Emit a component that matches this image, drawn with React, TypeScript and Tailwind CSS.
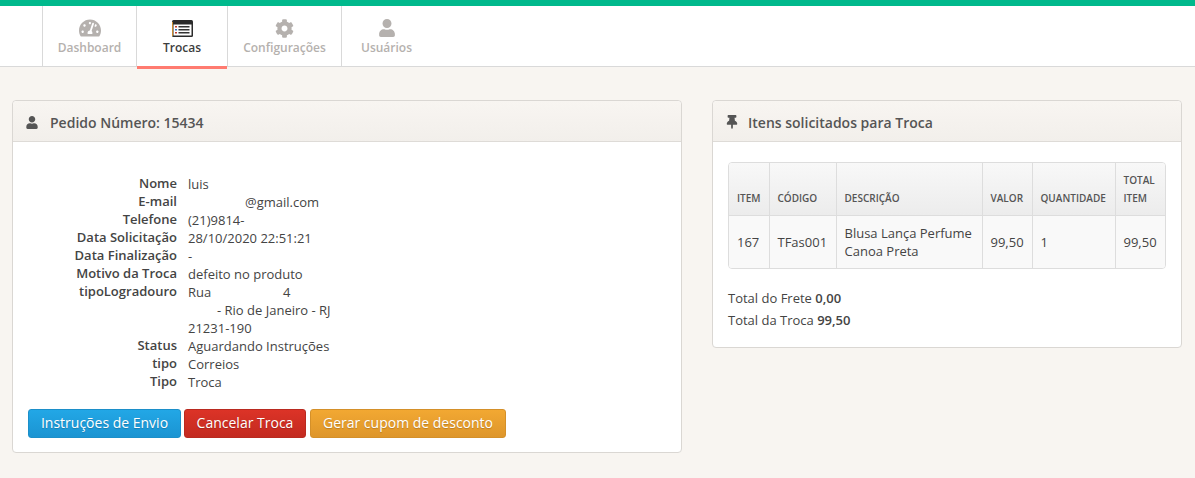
import { FaCog, FaTachometerAlt, FaThumbtack, FaUser } from 'react-icons/fa';

const detalhes: { label: string; value: React.ReactNode }[] = [
  { label: 'Nome', value: 'luis' },
  { label: 'E-mail', value: <span className="ml-[57px]">@gmail.com</span> },
  { label: 'Telefone', value: '(21)9814-' },
  { label: 'Data Solicitação', value: '28/10/2020 22:51:21' },
  { label: 'Data Finalização', value: '-' },
  { label: 'Motivo da Troca', value: 'defeito no produto' },
  {
    label: 'tipoLogradouro',
    value: (
      <>
        <span className="flex">
          <span className="w-[95px]">Rua</span>
          <span>4</span>
        </span>
        <span className="block pl-[29px]">- Rio de Janeiro - RJ</span>
        <span className="block">21231-190</span>
      </>
    ),
  },
  { label: 'Status', value: 'Aguardando Instruções' },
  { label: 'tipo', value: 'Correios' },
  { label: 'Tipo', value: 'Troca' },
];

function TrocasIcon() {
  return (
    <svg width="21" height="17" viewBox="0 0 21 17" aria-hidden="true">
      <rect x="0" y="0" width="21" height="17" rx="1.5" fill="#2b2b2b" />
      <rect x="0" y="2" width="1" height="14" fill="#c98a2e" />
      <rect x="1.5" y="4.5" width="18" height="11" fill="#fff" />
      <rect x="3" y="6" width="2" height="1.5" fill="#c0392b" />
      <rect x="3" y="9" width="2" height="1.5" fill="#2c6fbb" />
      <rect x="3" y="12" width="2" height="1.5" fill="#c0392b" />
      <rect x="6.5" y="6" width="11" height="1.5" fill="#333" />
      <rect x="6.5" y="9" width="11" height="1.5" fill="#333" />
      <rect x="6.5" y="12" width="11" height="1.5" fill="#333" />
    </svg>
  );
}

function NavTab({
  label,
  icon,
  width,
  active,
}: {
  label: string;
  icon: React.ReactNode;
  width: string;
  active?: boolean;
}) {
  return (
    <a
      className={`relative flex h-full flex-col items-center border-l border-[#d9d9d9] pt-[11px] text-[12px] font-semibold leading-[17px] ${width} ${
        active ? 'text-[#3d3d3d]' : 'text-[#b5b1ae]'
      }`}
    >
      <span className="flex h-[22px] items-center">{icon}</span>
      <span>{label}</span>
      {active && <span className="absolute -bottom-[3px] left-0 right-0 h-[3px] bg-[#ff7b70]" />}
    </a>
  );
}

function PanelHeader({ icon, title, gap }: { icon: React.ReactNode; title: string; gap: string }) {
  return (
    <div className={`flex h-[41px] items-center rounded-t-[4px] border-b border-[#dedbd7] bg-gradient-to-b from-[#f8f5f1] to-[#f2efeb] pl-[13px] pt-[2px] text-[14px] font-semibold text-[#555] ${gap}`}>
      <span className="flex w-[12px] justify-center text-[#555]">{icon}</span>
      {title}
    </div>
  );
}

const th = 'border-l border-[#dddddd] px-[8px] pb-[8px] align-bottom text-left text-[10px] font-semibold uppercase leading-[18px] text-[#555]';
const td = 'border-l border-[#dddddd] px-[8px] align-middle text-[13px] leading-[18px] text-[#444]';

export default function App() {
  return (
    <div className="h-[478px] overflow-hidden bg-[#f8f5f1] font-['Open_Sans',sans-serif] text-[13px] text-[#444]">
      <div className="h-[6px] bg-[#00b98c]" />
      <nav className="flex h-[61px] border-b border-[#d9d9d9] bg-white pl-[42px]">
        <NavTab label="Dashboard" width="w-[94px]" icon={<FaTachometerAlt className="text-[22px] text-[#b5b1ae]" />} />
        <NavTab label="Trocas" width="w-[91px]" active icon={<TrocasIcon />} />
        <NavTab label="Configurações" width="w-[114px]" icon={<FaCog className="text-[19px] text-[#b5b1ae]" />} />
        <NavTab label="Usuários" width="w-[90px]" icon={<FaUser className="text-[18px] text-[#b5b1ae]" />} />
      </nav>

      <main className="flex items-start gap-[30px] pl-[12px] pt-[33px]">
        <section className="h-[353px] w-[670px] rounded-[4px] border border-[#dad7d3] bg-white">
          <PanelHeader gap="gap-[12px]" icon={<FaUser className="text-[13px]" />} title="Pedido Número: 15434" />
          <dl className="grid grid-cols-[164px_1fr] gap-x-[11px] pt-[33px] text-[13px] leading-[18px]">
            {detalhes.map((d) => (
              <div key={d.label} className="contents">
                <dt className="-mt-[1px] text-right font-semibold text-[#444]">{d.label}</dt>
                <dd className="text-[#444]">{d.value}</dd>
              </div>
            ))}
          </dl>
          <div className="flex pl-[15px] pt-[18px] text-[14px] leading-[26px] text-white">
            <button className="h-[29px] w-[153px] rounded-[3px] border border-[#1c8fc9] bg-gradient-to-b from-[#22a7e6] to-[#1b94d2] pb-[1px] [text-shadow:0_1px_1px_rgba(0,0,0,0.2)]">
              Instruções de Envio
            </button>
            <button className="ml-[3px] h-[29px] w-[122px] rounded-[3px] border border-[#b92a20] bg-gradient-to-b from-[#dc3327] to-[#c32a20] pb-[1px] [text-shadow:0_1px_1px_rgba(0,0,0,0.2)]">
              Cancelar Troca
            </button>
            <button className="ml-[4px] h-[29px] w-[196px] rounded-[3px] border border-[#d4902a] bg-gradient-to-b from-[#f2a832] to-[#de962b] pb-[1px] [text-shadow:0_1px_1px_rgba(0,0,0,0.2)]">
              Gerar cupom de desconto
            </button>
          </div>
        </section>

        <section className="h-[248px] w-[470px] rounded-[4px] border border-[#dad7d3] bg-white">
          <PanelHeader gap="gap-[10px]" icon={<FaThumbtack className="text-[14px]" />} title="Itens solicitados para Troca" />
          <div className="px-[15px] pt-[20px]">
            <div className="overflow-hidden rounded-[4px] border border-[#dddddd]">
              <table className="w-full table-fixed border-collapse">
                <colgroup>
                  <col className="w-[40px]" />
                  <col className="w-[67px]" />
                  <col className="w-[146px]" />
                  <col className="w-[50px]" />
                  <col className="w-[83px]" />
                  <col />
                </colgroup>
                <thead>
                  <tr className="h-[52px] bg-gradient-to-b from-[#f8f8f8] to-[#ececec]">
                    <th className={`${th} border-l-0`}>Item</th>
                    <th className={th}>Código</th>
                    <th className={th}>Descrição</th>
                    <th className={th}>Valor</th>
                    <th className={th}>Quantidade</th>
                    <th className={th}>Total Item</th>
                  </tr>
                </thead>
                <tbody>
                  <tr className="h-[53px] border-t border-[#dddddd] bg-[#f9f9f9]">
                    <td className={`${td} border-l-0`}>167</td>
                    <td className={td}>TFas001</td>
                    <td className={td}>Blusa Lança Perfume Canoa Preta</td>
                    <td className={td}>99,50</td>
                    <td className={td}>1</td>
                    <td className={td}>99,50</td>
                  </tr>
                </tbody>
              </table>
            </div>
            <p className="mt-[18px] leading-[22px]">
              Total do Frete <b className="font-semibold">0,00</b>
            </p>
            <p className="leading-[22px]">
              Total da Troca <b className="font-semibold">99,50</b>
            </p>
          </div>
        </section>
      </main>
    </div>
  );
}
